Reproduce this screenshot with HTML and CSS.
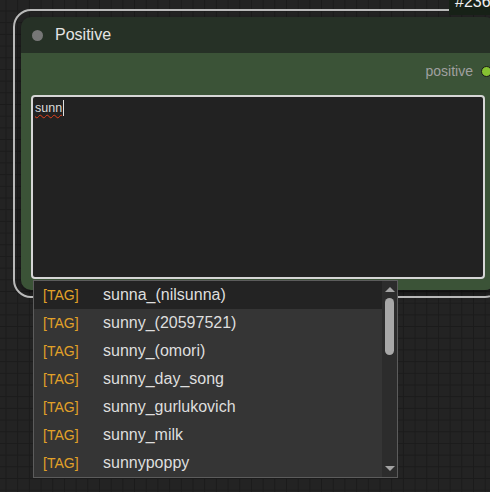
FILE: index.html
```html
<!DOCTYPE html>
<html>
<head>
<meta charset="utf-8">
<link rel="stylesheet" href="styles.css">
</head>
<body>
<div class="canvas">
  <div class="node">
    <div class="badge">#236</div>
    <div class="title">
      <span class="dot"></span>
      <span class="title-text">Positive</span>
    </div>
    <div class="body">
      <div class="output">
        <span class="out-label">positive</span>
        <span class="out-dot"></span>
      </div>
      <div class="editor"><span class="typed">sunn</span><span class="caret"></span></div>
    </div>
  </div>

  <div class="dropdown">
    <div class="list">
      <div class="row active"><span class="tag">[TAG]</span><span class="name">sunna_(nilsunna)</span></div>
      <div class="row"><span class="tag">[TAG]</span><span class="name">sunny_(20597521)</span></div>
      <div class="row"><span class="tag">[TAG]</span><span class="name">sunny_(omori)</span></div>
      <div class="row"><span class="tag">[TAG]</span><span class="name">sunny_day_song</span></div>
      <div class="row"><span class="tag">[TAG]</span><span class="name">sunny_gurlukovich</span></div>
      <div class="row"><span class="tag">[TAG]</span><span class="name">sunny_milk</span></div>
      <div class="row"><span class="tag">[TAG]</span><span class="name">sunnypoppy</span></div>
    </div>
    <div class="scrollbar">
      <span class="arrow-up"></span>
      <span class="thumb"></span>
      <span class="spacer"></span>
      <span class="arrow-down"></span>
    </div>
  </div>
</div>
</body>
</html>
```
FILE: styles.css
```css
html, body {
  margin: 0;
  padding: 0;
}
body {
  width: 490px;
  height: 492px;
  overflow: hidden;
  font-family: "Liberation Sans", Arial, sans-serif;
  background-color: #232323;
  background-image:
    linear-gradient(to right, #1b1b1b 1px, transparent 1px),
    linear-gradient(to bottom, #1b1b1b 1px, transparent 1px);
  background-size: 11.7px 11.7px;
  background-position: 5.5px 10.5px;
}
.canvas {
  position: relative;
  width: 490px;
  height: 492px;
  overflow: hidden;
}
.node {
  position: absolute;
  left: 21px;
  top: 17px;
  width: 474px;
  display: flex;
  flex-direction: column;
  border-radius: 10px;
  box-shadow: 0 3px 6px rgba(0, 0, 0, 0.5);
}
.node::before {
  content: "";
  position: absolute;
  inset: -8px;
  border: 2px solid #b9b9b9;
  border-radius: 18px;
  pointer-events: none;
}
.badge {
  position: absolute;
  left: 428px;
  top: -24px;
  height: 22px;
  padding: 0 6px;
  background: #172117;
  color: #f0f0f0;
  font-size: 16px;
  line-height: 18px;
  z-index: 2;
}
.title {
  height: 36px;
  background: #263126;
  border-radius: 10px 10px 0 0;
  display: flex;
  align-items: center;
  padding-left: 11px;
  gap: 12px;
}
.dot {
  width: 11px;
  height: 11px;
  border-radius: 50%;
  background: #777;
}
.title-text {
  font-size: 16px;
  color: #e4e4e4;
}
.body {
  height: 237px;
  box-sizing: border-box;
  background: #3b5337;
  border-radius: 0 0 10px 10px;
  padding: 0 10px;
  display: flex;
  flex-direction: column;
}
.output {
  height: 20px;
  margin-top: 8px;
  margin-right: -7px;
  display: flex;
  justify-content: flex-end;
  align-items: center;
  gap: 8px;
}
.out-label {
  font-size: 14px;
  color: #a0a0a0;
}
.out-dot {
  width: 9px;
  height: 9px;
  border-radius: 50%;
  background: #86c232;
  border: 1px solid #1a1a1a;
}
.editor {
  margin-top: 14px;
  height: 184px;
  box-sizing: border-box;
  border: 2px solid #d6d6d6;
  border-radius: 4px;
  background: #222;
  padding: 3px 2px;
  font-size: 12.5px;
  line-height: 15px;
  color: #dcdcdc;
}
.typed {
  text-decoration: underline wavy #e0401c;
  text-decoration-thickness: 1px;
  text-underline-offset: 2px;
}
.caret {
  display: inline-block;
  width: 1px;
  height: 16px;
  margin-left: 1px;
  background: #e0e0e0;
  vertical-align: -4px;
}
.dropdown {
  position: absolute;
  left: 33px;
  top: 280px;
  width: 365px;
  height: 198px;
  box-sizing: border-box;
  border: 1px solid #5c5c5c;
  background: #353535;
  display: flex;
  z-index: 3;
}
.list {
  flex: 1;
  display: flex;
  flex-direction: column;
}
.row {
  height: 28px;
  display: flex;
  align-items: center;
  padding-left: 9px;
}
.row.active {
  background: #232323;
}
.tag {
  width: 60px;
  font-size: 14px;
  color: #e2a128;
}
.name {
  font-size: 16px;
  color: #dedede;
}
.scrollbar {
  width: 15px;
  background: #2c2c2c;
  display: flex;
  flex-direction: column;
  align-items: center;
  padding: 6px 0 6px;
  box-sizing: border-box;
}
.arrow-up {
  width: 0;
  height: 0;
  border-left: 5px solid transparent;
  border-right: 5px solid transparent;
  border-bottom: 5px solid #a3a3a3;
}
.thumb {
  margin-top: 6px;
  width: 9px;
  height: 57px;
  border-radius: 5px;
  background: #a8a8a8;
}
.spacer {
  flex: 1;
}
.arrow-down {
  width: 0;
  height: 0;
  border-left: 5px solid transparent;
  border-right: 5px solid transparent;
  border-top: 5px solid #a3a3a3;
}
```
